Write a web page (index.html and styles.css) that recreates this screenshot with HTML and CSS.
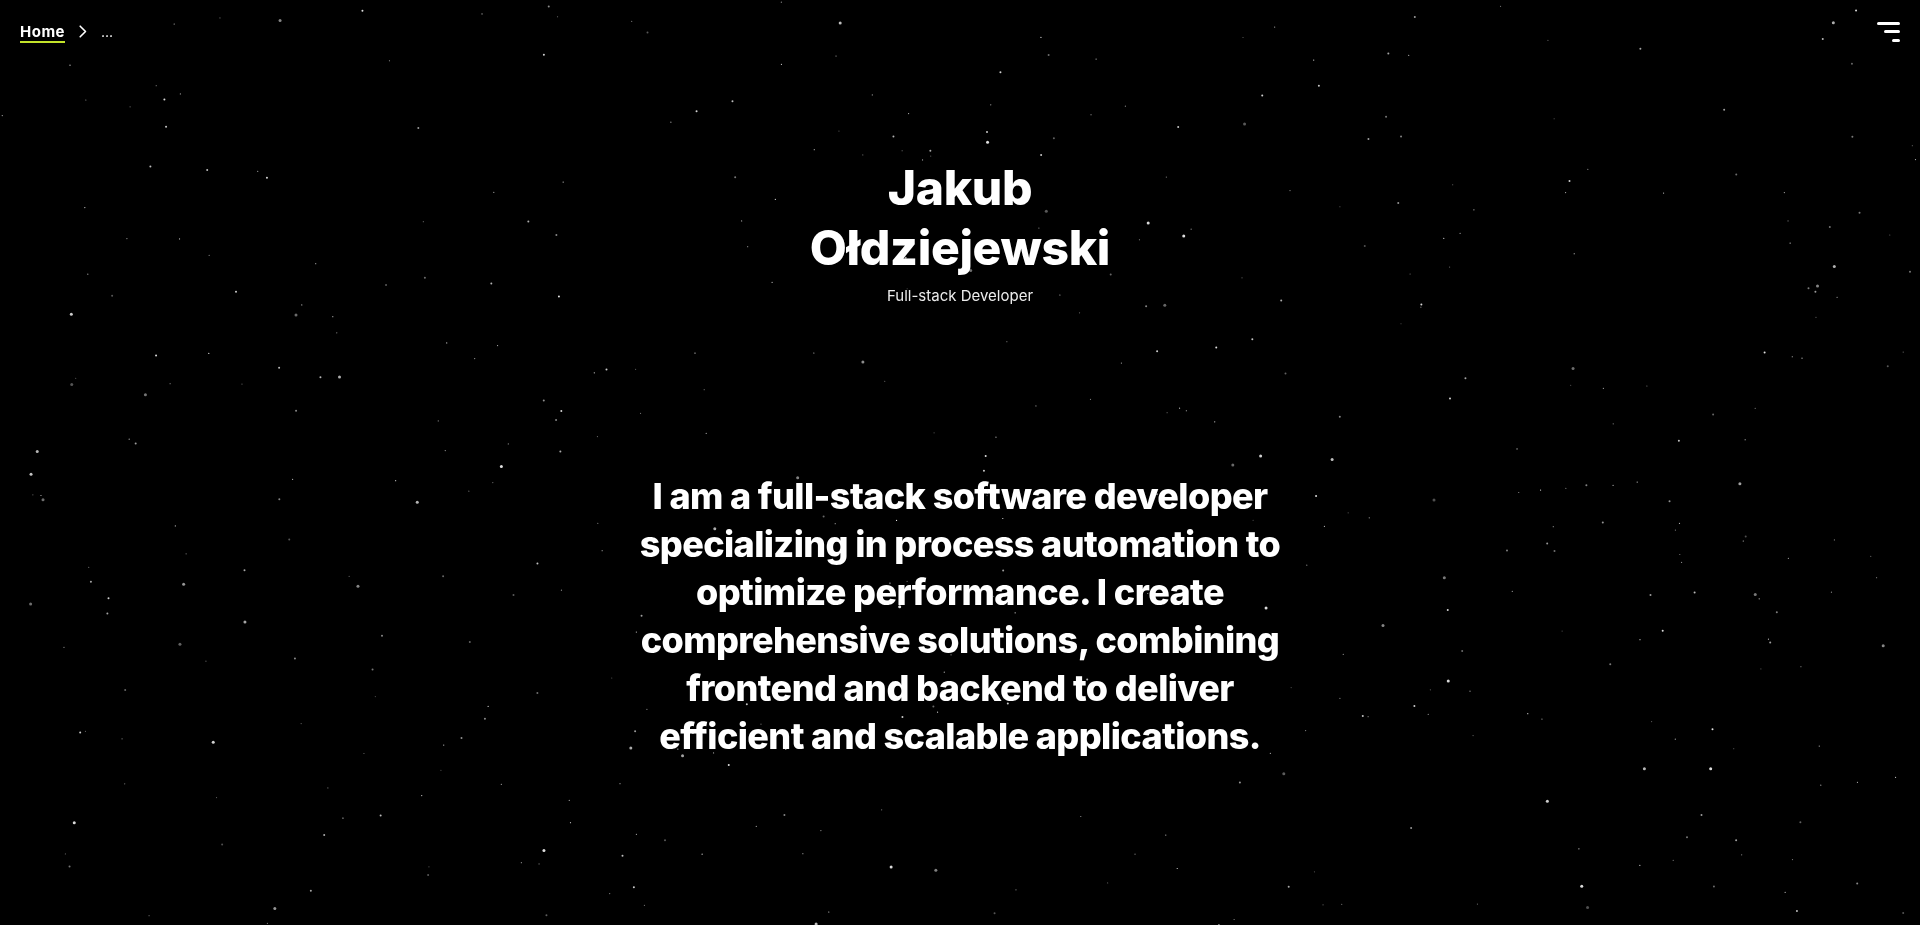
FILE: index.html
```html
<!DOCTYPE html>
<html lang="en">
<head>
<meta charset="utf-8">
<title>Jakub Ołdziejewski</title>
<link rel="stylesheet" href="styles.css">
</head>
<body>
<canvas class="stars" id="stars"></canvas>
<div class="page">
  <header class="topbar">
    <nav class="crumbs">
      <a class="crumb-home" href="#">Home</a>
      <svg class="crumb-sep" width="8" height="13" viewBox="0 0 8 13"><path d="M1.2 1.2 L6.5 6.5 L1.2 11.8" fill="none" stroke="#fff" stroke-width="1.6" stroke-linecap="round" stroke-linejoin="round"/></svg>
      <span class="crumb-more">...</span>
    </nav>
    <button class="menu-btn" aria-label="Menu">
      <span class="bar bar-lg"></span>
      <span class="bar bar-md"></span>
      <span class="bar bar-sm"></span>
    </button>
  </header>
  <main class="hero">
    <h1 class="name">Jakub<br>Ołdziejewski</h1>
    <p class="role">Full-stack Developer</p>
    <p class="about">I am a full-stack software developer specializing in process automation to optimize performance. I create comprehensive solutions, combining frontend and backend to deliver efficient and scalable applications.</p>
  </main>
</div>
<script src="script.js"></script>
</body>
</html>
```

FILE: styles.css
```css
* { box-sizing: border-box; }
html, body {
  margin: 0;
  padding: 0;
  background: #000;
  color: #fff;
  font-family: Inter, Roboto, "Liberation Sans", sans-serif;
  height: 100%;
  overflow: hidden;
}
.stars {
  position: fixed;
  left: 0;
  top: 0;
  width: 100vw;
  height: 100vh;
  z-index: 0;
}
.page {
  position: relative;
  z-index: 1;
}
.topbar {
  display: flex;
  justify-content: space-between;
  align-items: flex-start;
  height: 64px;
  padding: 0 20px;
}
.crumbs {
  display: flex;
  align-items: center;
  gap: 14px;
  padding-top: 22px;
}
.crumb-home {
  color: #fff;
  text-decoration: none;
  font-weight: 700;
  font-size: 15px;
  line-height: 19px;
  border-bottom: 2.5px solid #c3e32a;
  letter-spacing: 0.5px;
}
.crumb-sep {
  display: block;
  margin-top: -2px;
}
.crumb-more {
  font-size: 14px;
  line-height: 19px;
  margin-top: -2px;
}
.menu-btn {
  display: flex;
  flex-direction: column;
  align-items: flex-end;
  gap: 5.5px;
  background: none;
  border: 0;
  padding: 0;
  margin-top: 21.5px;
  cursor: pointer;
}
.bar {
  display: block;
  height: 3px;
  background: #fff;
  border-radius: 1.5px;
}
.bar-lg { width: 23px; }
.bar-md { width: 16px; }
.bar-sm { width: 8px; }
.hero {
  display: flex;
  flex-direction: column;
  align-items: center;
  text-align: center;
  padding-top: 94px;
}
.name {
  margin: 0;
  font-size: 48px;
  line-height: 60px;
  font-weight: 800;
  letter-spacing: -0.35px;
}
.role {
  margin: 7px 0 0;
  font-size: 15px;
  line-height: 22px;
  color: #ececec;
}
.about {
  margin: 165px 0 0;
  max-width: 670px;
  font-size: 36px;
  line-height: 48px;
  font-weight: 800;
  letter-spacing: -0.6px;
}
```

FILE: script.js
```js
(function () {
  var c = document.getElementById('stars');
  var w = window.innerWidth, h = window.innerHeight;
  c.width = w; c.height = h;
  var ctx = c.getContext('2d');
  ctx.fillStyle = '#000';
  ctx.fillRect(0, 0, w, h);
  var s = 1234567;
  function rnd() {
    s |= 0; s = s + 0x6D2B79F5 | 0;
    var t = Math.imul(s ^ s >>> 15, 1 | s);
    t = t + Math.imul(t ^ t >>> 7, 61 | t) ^ t;
    return ((t ^ t >>> 14) >>> 0) / 4294967296;
  }
  for (var i = 0; i < 480; i++) {
    var x = rnd() * w, y = rnd() * h;
    var r = rnd();
    var size = r < 0.55 ? 0.6 : (r < 0.88 ? 1.0 : 1.5);
    var a = 0.3 + rnd() * 0.6;
    ctx.fillStyle = 'rgba(255,255,255,' + a.toFixed(2) + ')';
    ctx.beginPath();
    ctx.arc(x, y, size, 0, Math.PI * 2);
    ctx.fill();
  }
})();
```
